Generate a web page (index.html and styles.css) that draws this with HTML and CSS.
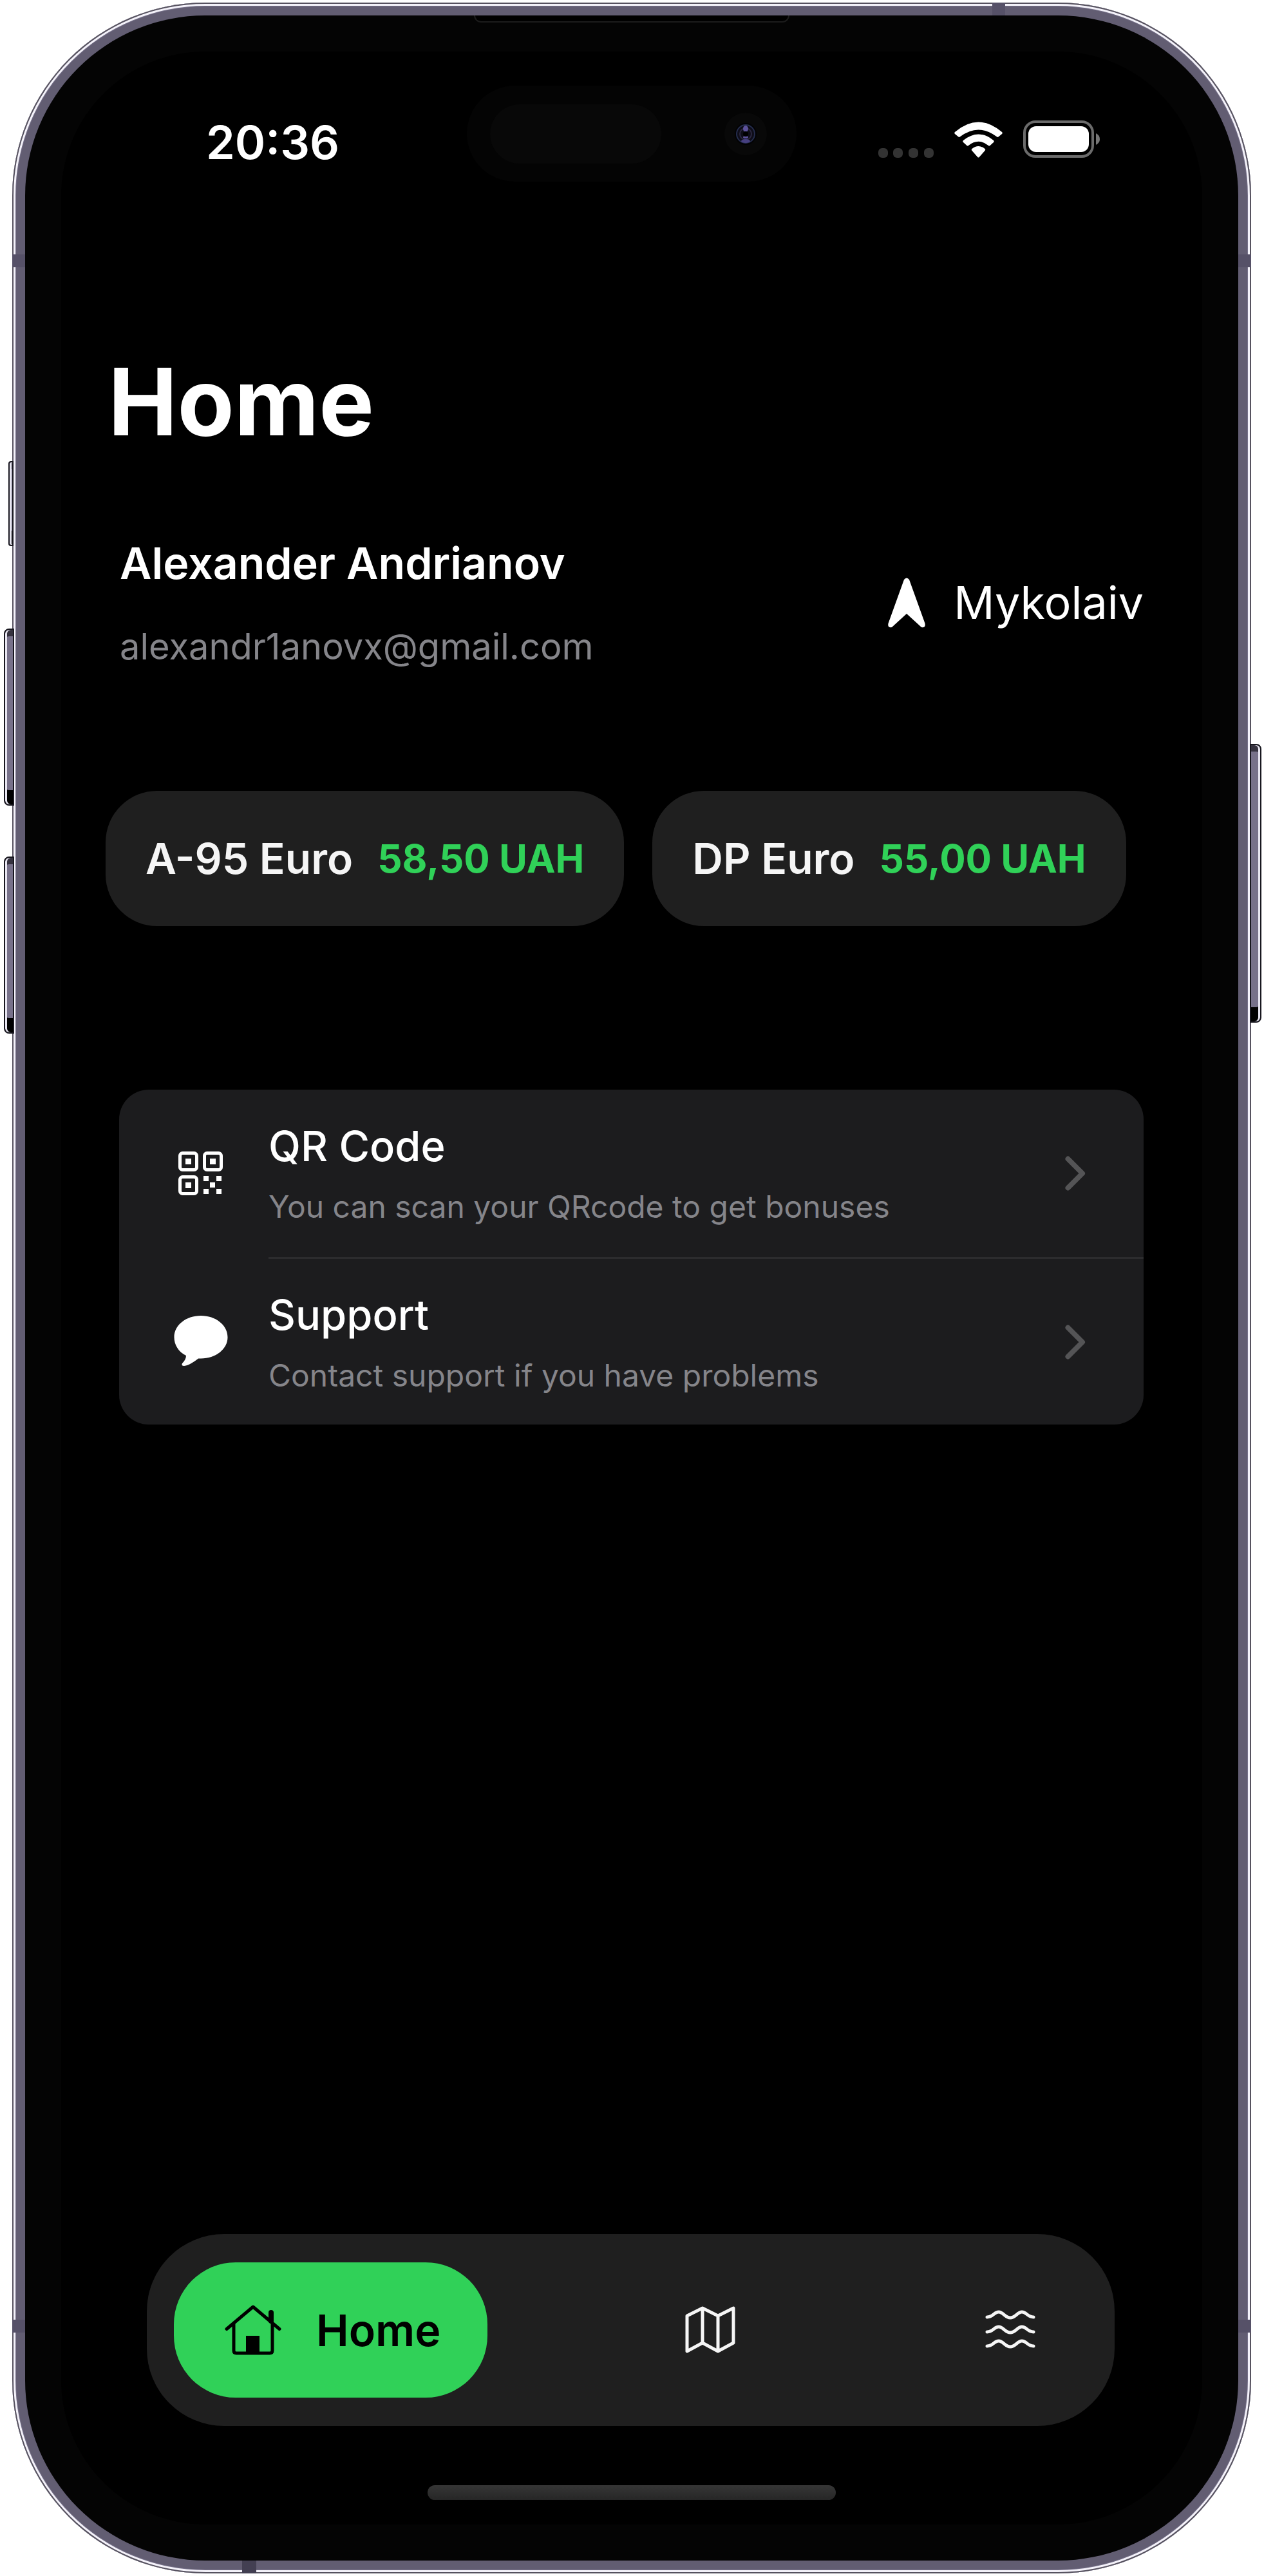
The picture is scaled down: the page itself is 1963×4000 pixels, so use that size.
FILE: index.html
```html
<!DOCTYPE html>
<html lang="en">
<head>
<meta charset="utf-8">
<title>Home</title>
<meta name="viewport" content="width=device-width, initial-scale=1">
<link rel="stylesheet" href="styles.css">
</head>
<body>
<div class="device">
  <span class="side-key key-mute"></span>
  <span class="side-key key-up"></span>
  <span class="side-key key-down"></span>
  <span class="side-key key-power"></span>
  <div class="frame">
    <div class="bezel">
      <span class="speaker"></span>
      <div class="screen">
        <header class="status">
          <time class="clock">20:36</time>
          <div class="island">
            <span class="sensor"></span>
            <svg class="camera" viewBox="0 0 66 66" aria-hidden="true">
              <circle cx="33" cy="33" r="33" fill="#080808"/>
              <circle cx="33" cy="33" r="17" fill="#020204"/>
              <circle cx="33" cy="33" r="14" fill="#0e0d18" stroke="#242c4c" stroke-width="2"/>
              <circle cx="33" cy="33" r="9" fill="none" stroke="#2b2740" stroke-width="2"/>
              <ellipse cx="33" cy="25" rx="4" ry="5" fill="#5d529c"/>
              <ellipse cx="33" cy="44" rx="7" ry="3" fill="#463f80"/>
              <ellipse cx="33" cy="38" rx="4" ry="2" fill="#5d529c"/>
              <circle cx="33" cy="33" r="4" fill="#000"/>
            </svg>
          </div>
          <div class="indicators">
            <svg class="signal" viewBox="0 0 86 15" aria-hidden="true" fill="#333">
              <rect width="15" height="15" rx="6"/><rect x="23" width="15" height="15" rx="6"/><rect x="47" width="15" height="15" rx="6"/><rect x="71" width="15" height="15" rx="6"/>
            </svg>
            <svg class="wifi" viewBox="0 0 75 56" aria-hidden="true" fill="#fff">
              <path d="M1 16 Q37.500 -15 74 16 Q75.500 17.500 74 19 L68.500 23.500 Q67.500 24.500 66 23.300 Q37.500 1.500 9 23.300 Q7.500 24.500 6.500 23.500 L1 19 Q-.5 17.500 1 16Z"/>
              <path d="M14 29 Q37.500 10 61 29 Q62.500 30.500 61 32 L55.500 37 Q54.300 38 53 37 Q37.500 24.500 22 37 Q20.700 38 19.500 37 L14 32 Q12.500 30.500 14 29Z"/>
              <path d="M27.500 42 Q37.500 34 47.500 42 Q49 43.500 47.500 45 L38.700 55 Q37.500 56 36.300 55 L27.500 45 Q26 43.500 27.500 42Z"/>
            </svg>
            <svg class="battery" viewBox="0 0 120 58" aria-hidden="true">
              <rect x="2" y="2" width="106" height="54" rx="17" fill="none" stroke="#6b6b6b" stroke-width="4"/>
              <rect x="8" y="9" width="94" height="40" rx="12" fill="#fff"/>
              <path d="M113 20 Q119 23 119 29 Q119 35 113 38Z" fill="#777"/>
            </svg>
          </div>
        </header>

        <main class="content">
          <h1 class="title">Home</h1>
          <section class="profile">
            <div class="person">
              <p class="name">Alexander Andrianov</p>
              <p class="email">alexandr1anovx@gmail.com</p>
            </div>
            <button class="city" type="button">
              <svg class="arrow" viewBox="0 0 58 78" aria-hidden="true"><path d="M25 3 Q29 -2 33 3 L57.500 71 Q59 78 52 77 L29 56 L6 77 Q-1 78 .5 71Z" fill="#fff"/></svg>
              <span>Mykolaiv</span>
            </button>
          </section>

          <section class="prices">
            <div class="price"><span class="fuel">A-95 Euro</span><span class="amount">58,50 UAH</span></div>
            <div class="price"><span class="fuel">DP Euro</span><span class="amount">55,00 UAH</span></div>
          </section>

          <nav class="list">
            <a class="row" href="#qr">
              <svg class="row-icon" viewBox="0 0 84 80" aria-hidden="true" fill="none" stroke="#fff" stroke-width="5">
                <rect x="9.500" y="8.500" width="26" height="26" rx="4"/><rect x="47.500" y="8.500" width="26" height="26" rx="4"/><rect x="9.500" y="45.500" width="26" height="26" rx="4"/>
                <g fill="#fff" stroke="none"><rect x="18" y="17" width="9" height="9"/><rect x="56" y="17" width="9" height="9"/><rect x="18" y="54" width="9" height="9"/><rect x="46" y="44" width="8" height="8"/><rect x="66" y="44" width="8" height="8"/><rect x="56" y="54" width="8" height="8"/><rect x="46" y="64" width="8" height="8"/><rect x="66" y="64" width="8" height="8"/></g>
              </svg>
              <span class="row-body">
                <span class="row-text"><span class="row-title">QR Code</span><span class="row-sub">You can scan your QRcode to get bonuses</span></span>
                <svg class="chevron" viewBox="0 0 32 54" aria-hidden="true"><path d="M4.500 4.500 L27 27 L4.500 49.500" fill="none" stroke="#545456" stroke-width="8" stroke-linecap="round" stroke-linejoin="round"/></svg>
              </span>
            </a>
            <a class="row" href="#support">
              <svg class="row-icon" viewBox="0 0 84 80" aria-hidden="true"><path d="M42 1 C65 1 83.500 15.500 83.500 34.500 C83.500 53 65 67.500 42 67.500 Q39.500 67.500 38 67.400 C31 73 23 78 16 79 Q11 79 13 75 Q19 69 19 63 C7 57 .5 46 .5 34.500 C.5 15.500 19 1 42 1Z" fill="#fff"/></svg>
              <span class="row-body">
                <span class="row-text"><span class="row-title">Support</span><span class="row-sub">Contact support if you have problems</span></span>
                <svg class="chevron" viewBox="0 0 32 54" aria-hidden="true"><path d="M4.500 4.500 L27 27 L4.500 49.500" fill="none" stroke="#545456" stroke-width="8" stroke-linecap="round" stroke-linejoin="round"/></svg>
              </span>
            </a>
          </nav>
        </main>

        <nav class="tabs">
          <button class="tab-active" type="button">
            <svg class="tab-home" viewBox="0 0 88 78" aria-hidden="true" fill="none" stroke="#000" stroke-width="5" stroke-linecap="round" stroke-linejoin="round">
              <path d="M3 37.500 L44 3 L85 37.500"/><path d="M14 30 V71 Q14 75 18 75 H70 Q74 75 74 71 V30"/><path d="M72 12 V25" stroke-width="8"/><path d="M33 48 H54 V75 H33Z" fill="#000" stroke="none"/>
            </svg>
            <span>Home</span>
          </button>
          <button class="tab" type="button" aria-label="Map">
            <svg class="tab-icon" viewBox="0 0 78 74" aria-hidden="true" fill="none" stroke="#f5f5f5" stroke-width="5" stroke-linejoin="round"><path d="M3 15 L27 3 L51 15 L75 3 V57 L51 70 L27 57 L3 70Z M27 3 V57 M51 15 V70"/></svg>
          </button>
          <button class="tab" type="button" aria-label="Waves">
            <svg class="tab-icon" viewBox="0 0 78 74" aria-hidden="true" fill="none" stroke="#f5f5f5" stroke-width="5" stroke-linecap="round" stroke-linejoin="round"><path id="wave" d="M3 17 C12 17 14 9 21 9 C28 9 31 18 39 18 C47 18 50 9 57 9 C64 9 66 17 75 17"/><use href="#wave" y="23"/><use href="#wave" y="45"/></svg>
          </button>
        </nav>
        <div class="home-bar"></div>
      </div>
    </div>
  </div>
  <span class="band band-left band-high"></span>
  <span class="band band-right band-high"></span>
  <span class="band band-left band-low"></span>
  <span class="band band-right band-low"></span>
  <span class="band band-top"></span>
  <span class="band band-bottom"></span>
</div>
</body>
</html>
```
FILE: styles.css
```css
* { box-sizing: border-box; }
body { margin: 0; background: #fff; font-family: Inter, "Liberation Sans", sans-serif; color: #fff; }
h1, p { margin: 0; }
button { font: inherit; color: inherit; background: none; border: 0; padding: 0; cursor: pointer; }
a { color: inherit; text-decoration: none; }
svg { display: block; flex: none; }

/* phone body */
.device { position: relative; min-height: 100vh; padding: 4px 20px 4px 19px; display: flex; }
.frame {
  flex: 1; display: flex; padding: 20px; border-radius: 300px; background: #625d72;
  box-shadow: inset 0 0 0 2px #56525f, inset 0 0 0 5px #f4f2fa, inset 0 0 0 6px #77728a;
}
.bezel { position: relative; flex: 1; display: flex; padding: 56px; border-radius: 280px; background: #040404; }
.speaker {
  position: absolute; top: 0; left: 37%; right: 37%; height: 11px;
  border: 2px solid #1c1c1c; border-top: 0; border-radius: 0 0 12px 12px; background: #000;
}
.screen { flex: 1; min-width: 0; display: flex; flex-direction: column; border-radius: 224px; background: #000; }

.side-key { position: absolute; border: 2px solid #18171f; background: #77718a; box-shadow: inset 3px 0 0 #e9e7f2, inset 0 10px 0 #35323f, inset 0 -22px 0 #000; }
.key-mute { left: 13px; top: 716px; width: 8px; height: 132px; border-radius: 4px 0 0 4px; }
.key-up { left: 6px; top: 976px; width: 16px; height: 275px; border-radius: 8px 0 0 8px; }
.key-down { left: 6px; top: 1330px; width: 16px; height: 275px; border-radius: 8px 0 0 8px; }
.key-power { right: 4px; top: 1155px; width: 18px; height: 433px; border-radius: 0 8px 8px 0; box-shadow: inset -3px 0 0 #e9e7f2, inset 0 10px 0 #35323f, inset 0 -22px 0 #000; }

.band { position: absolute; background: #565168; }
.band-left { left: 19px; width: 20px; height: 20px; }
.band-right { right: 20px; width: 20px; height: 20px; }
.band-high { top: 395px; }
.band-low { bottom: 378px; }
.band-top { top: 4px; right: 402px; width: 20px; height: 20px; }
.band-bottom { bottom: 4px; left: 376px; width: 22px; height: 20px; background: #433f52; }

/* status bar */
.status { display: grid; grid-template-columns: 1fr 512px 1fr; align-items: center; padding-top: 53px; }
.clock { padding: 26px 0 0 225px; font-size: 72px; line-height: 88px; font-weight: 600; }
.island { display: flex; align-items: center; justify-content: space-between; height: 149px; padding: 0 46px 0 36px; border-radius: 75px; background: #040404; }
.sensor { width: 266px; height: 92px; border-radius: 46px; background: #080808; }
.camera { width: 66px; height: 66px; }
.indicators { display: flex; align-items: flex-end; justify-content: flex-end; gap: 32px; padding: 16px 158px 0 0; }
.signal { width: 86px; height: 15px; }
.wifi { width: 75px; height: 56px; }
.battery { width: 120px; height: 58px; }

/* page */
.content { flex: 1; padding: 0 91px 0 69px; }
.title { margin-top: 254px; padding-left: 4px; font-size: 144px; line-height: 176px; font-weight: 700; }
.profile { display: flex; justify-content: space-between; align-items: center; margin-top: 120px; padding-left: 22px; }
.name { font-size: 68px; line-height: 84px; font-weight: 600; }
.email { margin-top: 52px; font-size: 56px; line-height: 72px; color: #85858a; }
.city { display: flex; align-items: center; gap: 44px; font-size: 70px; line-height: 84px; font-weight: 400; }
.arrow { width: 58px; height: 78px; }

.prices { display: flex; gap: 44px; margin-top: 188px; }
.price { display: flex; align-items: center; justify-content: center; gap: 38px; height: 210px; padding: 0 62px; border-radius: 80px; background: #1f1f1f; white-space: nowrap; }
.fuel { font-size: 66px; font-weight: 600; color: #f5f5f5; }
.amount { font-size: 60px; font-weight: 700; color: #30d158; }

.list { margin: 254px 0 0 21px; border-radius: 46px; background: #1c1c1e; }
.row { display: flex; align-items: center; padding-left: 85px; }
.row-icon { width: 84px; height: 80px; }
.row-body { flex: 1; display: flex; align-items: center; justify-content: space-between; min-height: 260px; margin-left: 63px; padding-right: 90px; }
.row + .row .row-body { border-top: 3px solid #2c2c2e; }
.row-text { display: flex; flex-direction: column; gap: 24px; }
.row-title { font-size: 65px; line-height: 80px; font-weight: 500; }
.row-sub { font-size: 48px; line-height: 60px; color: #85858a; }
.chevron { width: 32px; height: 54px; }

/* bottom navigation */
.tabs { display: flex; align-items: center; justify-content: space-between; height: 298px; margin: 0 136px 0 133px; padding: 0 42px; border-radius: 120px; background: #1f1f1f; }
.tab-active { display: flex; align-items: center; gap: 54px; height: 210px; padding: 0 72px 0 79px; border-radius: 96px; background: #30d158; color: #000; font-size: 68px; font-weight: 600; }
.tab { padding-right: 81px; }
.tab-home { width: 88px; height: 78px; }
.tab-icon { width: 78px; height: 74px; }
.home-bar { align-self: center; width: 634px; height: 23px; margin: 92px 0 38px; border-radius: 12px; background: linear-gradient(#363636, #262626); }
```
